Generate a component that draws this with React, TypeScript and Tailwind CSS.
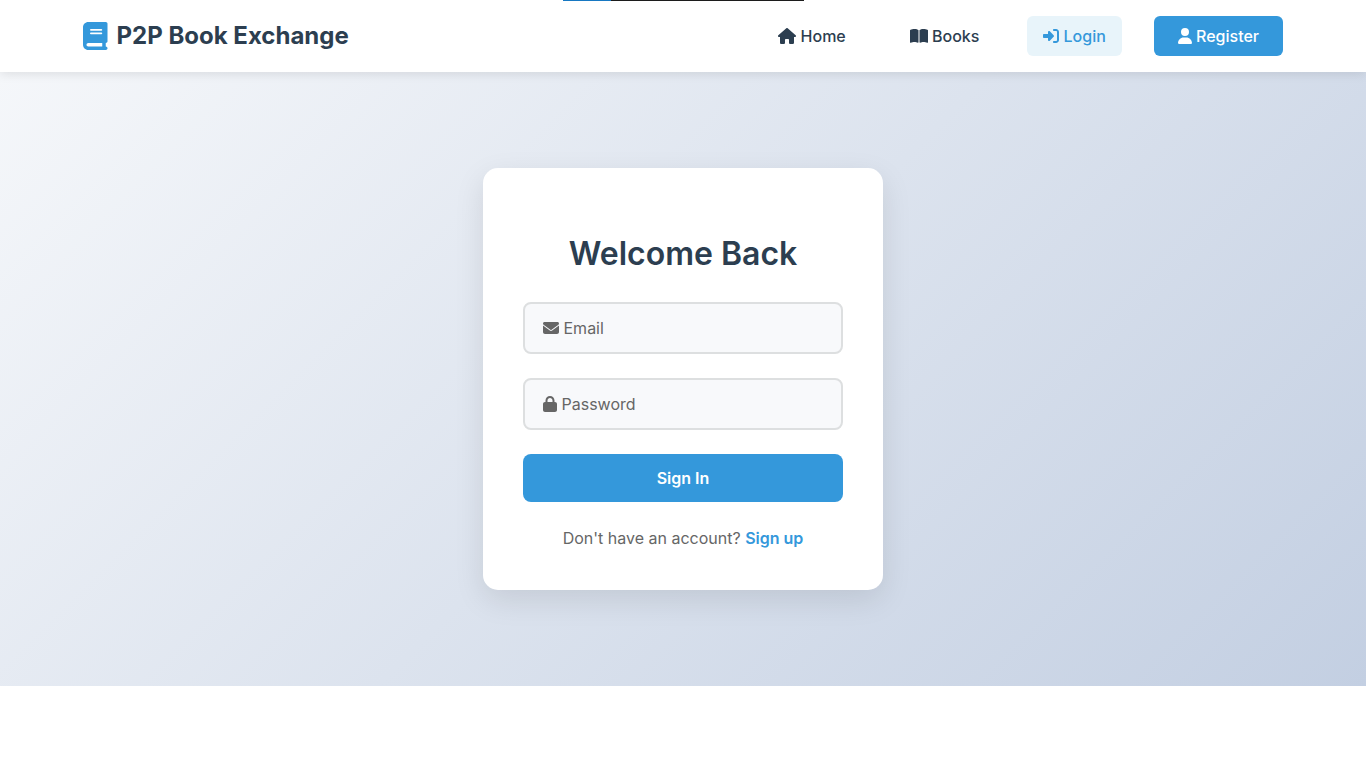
import type { ReactNode } from "react";
import {
  FaBook,
  FaBookOpen,
  FaEnvelope,
  FaHouse,
  FaLock,
  FaRightToBracket,
  FaUser,
} from "react-icons/fa6";

function NavLink({ icon, label, className }: { icon: ReactNode; label: string; className: string }) {
  return (
    <a href="#" className={`flex h-10 items-center rounded-md font-medium ${className}`}>
      {icon}
      <span className="ml-[4.2px]">{label}</span>
    </a>
  );
}

function Header() {
  return (
    <header className="relative z-10 h-[72px] bg-white shadow-[0_2px_10px_rgba(0,0,0,0.1)]">
      <div className="mx-auto flex h-full w-[1200px] items-center justify-between">
        <a href="#" className="flex items-center gap-[9px] text-2xl font-bold text-[#2c3e50]">
          <FaBook className="h-7 w-[24.5px] text-[#3498db]" />
          <span>P2P Book Exchange</span>
        </a>
        <nav className="flex items-center gap-8">
          <NavLink icon={<FaHouse className="h-4 w-[18px]" />} label="Home" className="px-4 text-[#2c3e50]" />
          <NavLink icon={<FaBookOpen className="h-4 w-[18px]" />} label="Books" className="px-4 text-[#2c3e50]" />
          <NavLink
            icon={<FaRightToBracket className="h-4 w-4" />}
            label="Login"
            className="bg-[#e8f4fa] px-4 text-[#3498db]"
          />
          <NavLink
            icon={<FaUser className="h-4 w-3.5" />}
            label="Register"
            className="bg-[#3498db] px-6 text-white"
          />
        </nav>
      </div>
      <div className="absolute top-0 left-[563px] flex h-px w-[241px] bg-[#1c1c1c]">
        <div className="w-12 bg-[#1778c2]" />
      </div>
    </header>
  );
}

function Field({ icon, label }: { icon: ReactNode; label: string }) {
  return (
    <div className="mb-6 flex h-[52px] items-center rounded-lg border-2 border-[#dddfe0] bg-[#f8f9fb] px-[18px] text-[#666666]">
      {icon}
      <span className="ml-[4.5px]">{label}</span>
    </div>
  );
}

export default function App() {
  return (
    <div className="min-h-screen bg-white font-['Inter',sans-serif] text-base">
      <Header />
      <main className="flex h-[614px] items-center justify-center bg-[linear-gradient(135deg,#f5f7fa_0%,#c3cfe2_100%)]">
        <section className="h-[422px] w-[400px] rounded-[15px] bg-white px-10 pt-[62px] shadow-[0_10px_30px_rgba(0,0,0,0.1)]">
          <h1 className="mb-6 text-center text-[32px] leading-[48px] font-semibold text-[#2c3e50]">
            Welcome Back
          </h1>
          <Field icon={<FaEnvelope className="h-4 w-4" />} label="Email" />
          <Field icon={<FaLock className="h-4 w-3.5" />} label="Password" />
          <button className="h-12 w-full rounded-lg bg-[#3498db] font-semibold text-white">Sign In</button>
          <p className="mt-6 text-center text-[#666666]">
            Don't have an account?{" "}
            <a href="#" className="font-semibold text-[#3498db]">
              Sign up
            </a>
          </p>
        </section>
      </main>
    </div>
  );
}
